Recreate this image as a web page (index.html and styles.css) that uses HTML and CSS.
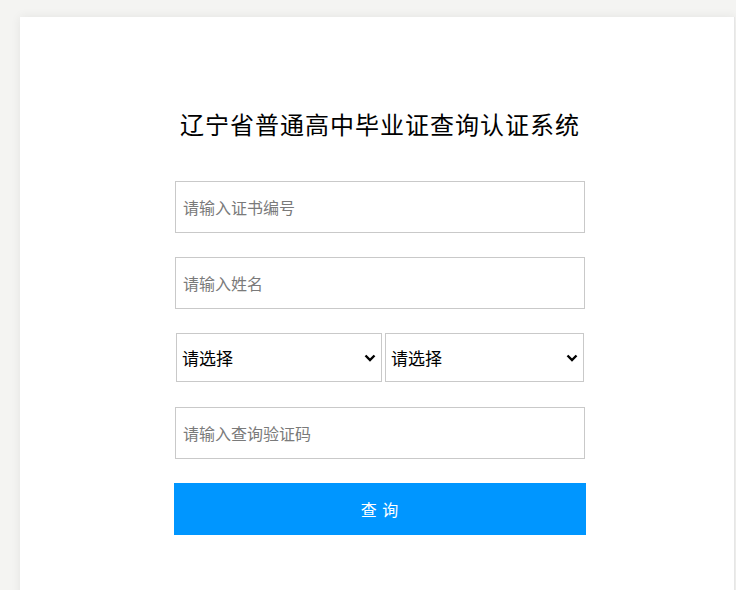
FILE: index.html
```html
<!DOCTYPE html>
<html lang="zh-CN">
<head>
    <meta charset="UTF-8">
    <meta name="viewport" content="width=device-width, initial-scale=1.0">
    <title>辽宁省普通高中毕业证查询认证系统</title>
    <link rel="stylesheet" href="styles.css">
</head>
<body>
    <div class="main-box">
        <h1>辽宁省普通高中毕业证查询认证系统</h1>
        <form class="query-form" method="POST" action="#">
            <input type="text" class="text-input" name="zsbh" placeholder="请输入证书编号">
            <input type="text" class="text-input" name="xm" placeholder="请输入姓名">
            <div class="select-row">
                <div class="select-wrap select-first">
                    <select name="city">
                        <option value="">请选择</option>
                    </select>
                    <svg class="select-arrow" width="12" height="8" viewBox="0 0 12 8"><path d="M1.5 1.5 L6 6 L10.5 1.5" fill="none" stroke="#000" stroke-width="2.4"/></svg>
                </div>
                <div class="select-wrap select-second">
                    <select name="school">
                        <option value="">请选择</option>
                    </select>
                    <svg class="select-arrow" width="12" height="8" viewBox="0 0 12 8"><path d="M1.5 1.5 L6 6 L10.5 1.5" fill="none" stroke="#000" stroke-width="2.4"/></svg>
                </div>
            </div>
            <input type="text" class="text-input" name="yzm" placeholder="请输入查询验证码">
            <button type="button" class="query-button">查 询</button>
        </form>
    </div>
</body>
</html>
```

FILE: styles.css
```css
html, body {
    overflow: hidden;
}

body {
    font-family: "Noto Sans CJK SC", "Microsoft YaHei", sans-serif;
    background-color: #f4f4f2;
    margin: 0;
    padding: 0;
    height: 590px;
}

.main-box {
    width: 715px;
    height: 600px;
    margin: 17px 0 0 20px;
    background-color: #ffffff;
    border-right: 1px solid #e6e6e6;
    box-shadow: 0 0 10px rgba(0, 0, 0, 0.07);
    padding-top: 92px;
    box-sizing: border-box;
}

.main-box h1 {
    font-size: 24px;
    font-weight: normal;
    line-height: 30px;
    color: #000;
    margin: 0 0 42px 154px;
    width: 412px;
    text-align: center;
    letter-spacing: 1px;
}

.query-form {
    width: 412px;
    margin-left: 154px;
    display: flex;
    flex-direction: column;
    gap: 24px;
}

.text-input {
    width: 410px;
    height: 52px;
    margin: 0 1px;
    padding: 0 7px;
    box-sizing: border-box;
    border: 1px solid #c9c9c9;
    font-size: 16px;
    font-family: inherit;
    color: #333;
    outline: none;
}

.text-input::placeholder {
    color: #7a7a7a;
}

.select-row {
    display: flex;
    gap: 3px;
    padding-left: 2px;
    height: 50px;
}

.select-wrap {
    position: relative;
    height: 49px;
}

.select-wrap select {
    width: 100%;
    height: 49px;
    box-sizing: border-box;
    border: 1px solid #c9c9c9;
    border-radius: 0;
    background-color: #fff;
    font-size: 17px;
    font-family: inherit;
    color: #000;
    padding-left: 5px;
    outline: none;
    appearance: none;
    -webkit-appearance: none;
}

.select-arrow {
    position: absolute;
    right: 6px;
    top: 21px;
    pointer-events: none;
}

.select-first {
    width: 206px;
}

.select-second {
    width: 199px;
}

.query-button {
    width: 412px;
    height: 52px;
    background-color: #0096ff;
    color: #fff;
    border: none;
    font-size: 16px;
    font-family: inherit;
    letter-spacing: 1px;
    cursor: pointer;
}

.query-button:hover {
    background-color: #0a84e0;
}
```
